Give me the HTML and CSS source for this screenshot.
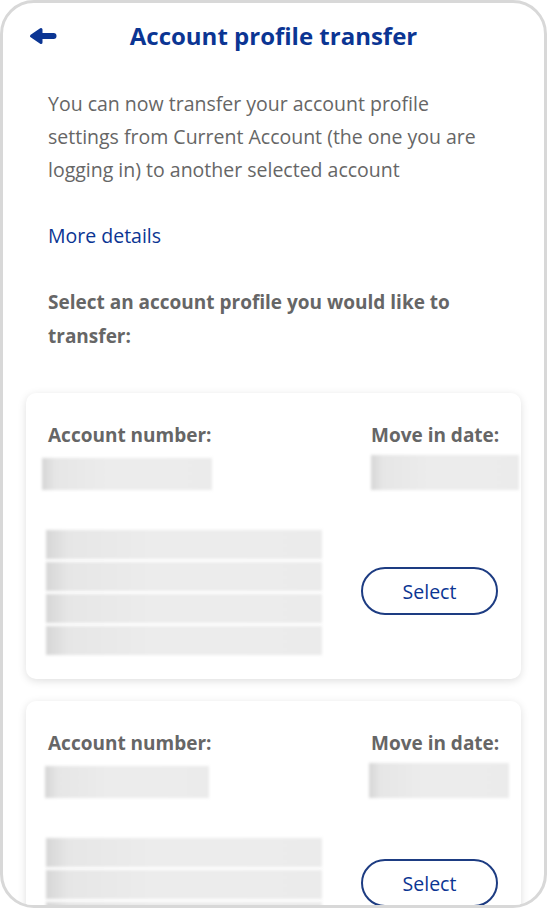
FILE: index.html
```html
<!DOCTYPE html>
<html lang="en">
<head>
  <meta charset="UTF-8">
  <meta name="viewport" content="width=device-width, initial-scale=1.0">
  <title>Account profile transfer</title>
  <link rel="stylesheet" href="styles.css">
</head>
<body>
  <div class="phone">
    <div class="header">
      <a class="back" href="#">
        <svg width="28" height="18" viewBox="0 0 28 18">
          <path d="M2.5 9 L12 2.5 L12 15.5 Z" fill="#0b3593" stroke="#0b3593" stroke-width="3" stroke-linejoin="round"/>
          <line x1="10" y1="9" x2="24.5" y2="9" stroke="#0b3593" stroke-width="6" stroke-linecap="round"/>
        </svg>
      </a>
      <h1 class="title">Account profile transfer</h1>
      <span></span>
    </div>

    <div class="content">
      <p class="intro">You can now transfer your account profile settings from Current Account (the one you are logging in) to another selected account</p>
      <a class="more" href="#">More details</a>
      <p class="prompt">Select an account profile you would like to transfer:</p>

      <div class="card">
        <div class="card-top">
          <div class="field">
            <div class="label">Account number:</div>
            <div class="blur blur-number"></div>
          </div>
          <div class="field field-right">
            <div class="label">Move in date:</div>
            <div class="blur blur-date"></div>
          </div>
        </div>
        <div class="card-bottom">
          <div class="address">
            <div class="blur blur-line"></div>
            <div class="blur blur-line"></div>
            <div class="blur blur-line"></div>
            <div class="blur blur-line"></div>
          </div>
          <button class="select-btn">Select</button>
        </div>
      </div>

      <div class="card">
        <div class="card-top">
          <div class="field">
            <div class="label">Account number:</div>
            <div class="blur blur-number short"></div>
          </div>
          <div class="field field-right">
            <div class="label">Move in date:</div>
            <div class="blur blur-date short"></div>
          </div>
        </div>
        <div class="card-bottom">
          <div class="address">
            <div class="blur blur-line"></div>
            <div class="blur blur-line"></div>
            <div class="blur blur-line"></div>
          </div>
          <button class="select-btn">Select</button>
        </div>
      </div>
    </div>
  </div>
</body>
</html>
```

FILE: styles.css
```css
body {
  margin: 0;
  background-color: #fff;
  font-family: "Open Sans", Roboto, sans-serif;
}

.phone {
  height: 908px;
  box-sizing: border-box;
  border: 3px solid #d8d8d8;
  border-radius: 34px;
  overflow: hidden;
  background-color: #fff;
}

.header {
  display: grid;
  grid-template-columns: 1fr auto 1fr;
  align-items: center;
  padding: 17px 26px 0;
}

.back {
  display: flex;
  height: 24px;
  align-items: center;
}

.title {
  margin: 0;
  font-size: 24px;
  line-height: 32px;
  font-weight: bold;
  color: #0b3593;
}

.content {
  padding: 35px 23px 0;
}

.intro {
  margin: 0 22px;
  font-size: 19.5px;
  line-height: 33px;
  color: #666;
}

.more {
  display: block;
  margin: 33px 22px 0;
  font-size: 19.5px;
  line-height: 33px;
  color: #0b3593;
  text-decoration: none;
}

.prompt {
  margin: 33px 22px 40px;
  font-size: 19px;
  line-height: 34px;
  font-weight: bold;
  color: #666;
}

.card {
  background-color: #fff;
  border-radius: 10px;
  box-shadow: 0 2px 9px rgba(0, 0, 0, 0.13);
  padding: 27px 0 24px 22px;
  margin-bottom: 22px;
}

.card-top {
  display: flex;
  justify-content: space-between;
}

.field-right {
  width: 150px;
}

.label {
  font-size: 19px;
  line-height: 30px;
  font-weight: bold;
  color: #666;
}

.blur {
  background: linear-gradient(to right, #d6d6d6 0%, #e6e6e6 8%, #ececec 40%, #ebebeb 100%);
  filter: blur(1.5px);
}

.blur-number {
  width: 170px;
  height: 32px;
  margin: 8px 0 0 -6px;
}

.blur-number.short {
  width: 164px;
  margin-left: -3px;
}

.blur-date {
  width: 148px;
  height: 35px;
  margin-top: 5px;
}

.blur-date.short {
  width: 140px;
  margin-left: -2px;
}

.card-bottom {
  display: flex;
  align-items: center;
  margin-top: 40px;
}

.address {
  display: flex;
  flex-direction: column;
  gap: 3px;
  width: 276px;
  margin-left: -2px;
}

.blur-line {
  height: 29px;
}

.select-btn {
  margin: 0 0 3px 39px;
  width: 137px;
  height: 48px;
  border: 2px solid #1d3c82;
  border-radius: 24px;
  background-color: #fff;
  color: #0b3593;
  font-family: "Open Sans", Roboto, sans-serif;
  font-size: 19.5px;
}
```
